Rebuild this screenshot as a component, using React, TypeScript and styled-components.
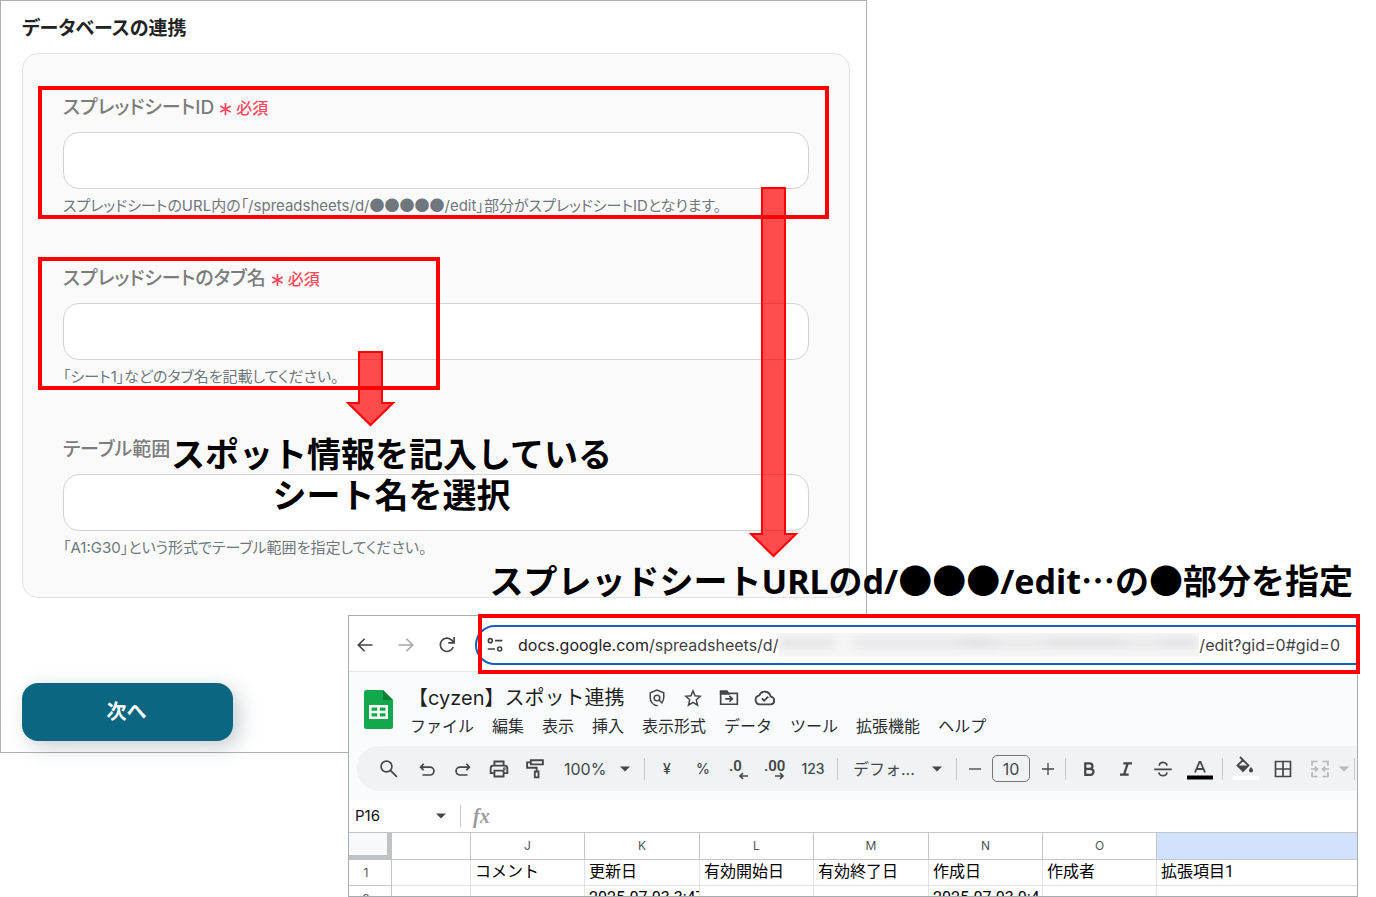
import React from "react";
import styled, { createGlobalStyle } from "styled-components";

const GlobalStyle = createGlobalStyle`
  *, *::before, *::after { box-sizing: border-box; }
  body {
    margin: 0;
    background: #fff;
    font-family: Inter, "Noto Sans CJK JP", sans-serif;
    overflow: hidden;
  }
  button, input, select { font: inherit; color: inherit; }
`;

const Stage = styled.main`
  display: grid;
  grid-template-columns: minmax(0, 1fr);
  align-items: start;
`;

/* ---------- settings form ---------- */

const FormPanel = styled.form`
  grid-area: 1 / 1;
  width: 63%;
  padding: 14px 16px 11px 21px;
  border: 1px solid #b0b0b0;
  background: #fff;
`;

const FormTitle = styled.h1`
  margin: 0 0 10px;
  font-size: 19px;
  line-height: 28px;
  font-weight: 600;
  color: #222;
  font-feature-settings: "palt";
`;

const Card = styled.div`
  display: flex;
  flex-direction: column;
  gap: 46px;
  padding: 39px 40px 37px;
  border: 1px solid #e0e2e3;
  border-radius: 16px;
  background: #fafafa;
`;

const Field = styled.div`
  position: relative;
  display: flex;
  flex-direction: column;
`;

const LabelRow = styled.div`
  display: flex;
  align-items: center;
  gap: 5px;
  margin-bottom: 9px;
  line-height: 30px;
  font-feature-settings: "palt";
`;

const FieldLabel = styled.label`
  font-size: 19px;
  font-weight: 500;
  color: #7c7c7c;
`;

const Required = styled.span`
  display: flex;
  align-items: center;
  gap: 4px;
  font-size: 16px;
  font-weight: 500;
  color: #f84a5e;
`;

const TextBox = styled.input`
  height: 57px;
  width: 100%;
  padding: 0 16px;
  border: 1px solid #d0d4d6;
  border-radius: 16px;
  background: #fff;
`;

const Help = styled.p`
  margin: 5px 0 0;
  font-size: 15px;
  line-height: 24px;
  color: #6f777c;
  white-space: nowrap;
  font-feature-settings: "palt";
`;

const Dots = styled.span`
  font-family: "Noto Sans CJK JP", sans-serif;
  font-feature-settings: normal;
  line-height: 1;
`;

const NextButton = styled.button`
  display: block;
  width: 211px;
  height: 58px;
  margin-top: 85px;
  padding: 0 2px 4px 0;
  border: 0;
  border-radius: 16px;
  background: #0b6781;
  color: #fff;
  font-size: 20px;
  font-weight: 700;
  box-shadow: 6px 6px 20px rgba(40, 60, 75, 0.25);
`;

/* ---------- annotations ---------- */

const Frame = styled.div<{ $wide?: boolean }>`
  position: absolute;
  z-index: 2;
  top: -7px;
  bottom: -1px;
  left: -25px;
  ${(p) => (p.$wide ? "right: -20px;" : "width: 402px;")}
  border: 4px solid #f00;
  pointer-events: none;
`;

const ArrowBox = styled.svg<{ $side: "left" | "right"; $x: number; $y: number }>`
  position: absolute;
  z-index: 3;
  top: ${(p) => p.$y}px;
  ${(p) => p.$side}: ${(p) => p.$x}px;
  overflow: visible;
  pointer-events: none;
`;

const Note = styled.p`
  margin: 0;
  position: absolute;
  z-index: 4;
  font-family: "Noto Sans CJK JP", sans-serif;
  font-size: 34px;
  line-height: 41px;
  font-weight: 700;
  color: #000;
  text-align: center;
  white-space: nowrap;
`;

const SheetNote = styled(Note)`
  top: -3px;
  left: 108px;
`;

const UrlNote = styled(Note)`
  bottom: 100%;
  right: 5px;
  padding-bottom: 13px;
`;

const Latin = styled.span`
  font-family: "Noto Sans", sans-serif;
`;

const UrlFrame = styled.div`
  position: absolute;
  z-index: 2;
  top: -1px;
  left: 130px;
  right: -2px;
  height: 60px;
  border: 4px solid #f00;
  pointer-events: none;
`;

/* ---------- browser window ---------- */

const WindowArea = styled.section`
  grid-area: 1 / 1;
  position: relative;
  z-index: 1;
  margin: 615px 18px 0 348px;
`;

const Window = styled.div`
  border: 1px solid #a9abac;
  background: #fff;
  overflow: hidden;
`;

const ChromeBar = styled.div`
  display: flex;
  align-items: center;
  height: 56px;
  padding-top: 3px;
  border-bottom: 1px solid #e3e6ea;
`;

const NavButton = styled.button<{ $dim?: boolean }>`
  display: grid;
  place-items: center;
  width: 41px;
  height: 40px;
  padding: 0 10px 0 0;
  border: 0;
  background: none;
  color: ${(p) => (p.$dim ? "#a6a8aa" : "#404346")};
`;

const NavGroup = styled.div`
  display: flex;
  width: 126px;
`;

const AddressBar = styled.div`
  display: flex;
  flex: 1;
  align-items: center;
  height: 40px;
  margin-right: -20px;
  padding: 0 35px 0 10px;
  border: 2px solid #1a5fbe;
  border-radius: 20px;
  font-size: 16px;
  color: #3f4245;
  white-space: nowrap;
`;

const Host = styled.span`
  margin-left: 15px;
  color: #1f2124;
`;

const Masked = styled.span`
  position: relative;
  flex: 1;
  height: 24px;
  background: #f6f6f7;
  overflow: hidden;

  &::before {
    content: "";
    position: absolute;
    inset: 5px 2px 9px 2px;
    background: linear-gradient(
      90deg,
      #e4e4e5 0 12%, #f4f4f5 14% 17%, #e6e6e8 19% 42%, #dfdfe1 45% 50%,
      #e8e8ea 53% 62%, #e0e0e2 66% 80%, #e8e8ea 84% 90%, #e2e2e4 92%
    );
    filter: blur(4px);
  }
`;

const DocHeader = styled.header`
  display: flex;
  align-items: flex-start;
  gap: 15px;
  height: 74px;
  padding: 11px 0 0 15px;
  background: #f9fbfd;
`;

const LogoSlot = styled.div`
  padding-top: 7px;
  line-height: 0;
`;

const DocTitleRow = styled.div`
  display: flex;
  align-items: center;
  height: 29px;
  font-size: 20px;
  line-height: 28px;
  color: #1f1f1f;
  white-space: nowrap;
`;

const DocTitle = styled.h2`
  margin: 0 14px 0 0;
  font: inherit;
`;

const TitleButton = styled.button`
  display: grid;
  place-items: center;
  width: 36px;
  height: 28px;
  padding: 0;
  border: 0;
  background: none;
  color: #444746;
`;

const MenuBar = styled.nav`
  display: flex;
  gap: 18px;
  padding-left: 2px;
  font-size: 16px;
  line-height: 28px;
`;

const MenuButton = styled.button`
  padding: 0;
  border: 0;
  background: none;
  color: #2b2d2f;
  white-space: nowrap;
`;

const ToolbarArea = styled.div`
  padding: 0 0 9px 8px;
  background: #f9fbfd;
`;

const Toolbar = styled.div`
  display: flex;
  align-items: center;
  height: 45px;
  padding-left: 11px;
  border-radius: 23px 0 0 23px;
  background: #eff3f6;
  color: #444746;
  overflow: hidden;
`;

const Tool = styled.button<{ $w?: number; $dim?: boolean }>`
  display: grid;
  flex: none;
  place-items: center;
  width: ${(p) => p.$w ?? 36}px;
  height: 36px;
  padding: 0;
  border: 0;
  background: none;
  font-size: 14px;
  font-weight: 500;
  color: ${(p) => (p.$dim ? "#b4b8bb" : "#444746")};
`;

const Divider = styled.span`
  flex: none;
  width: 1px;
  height: 22px;
  margin: 0 4px;
  background: #c7cacd;
`;

const SelectBox = styled.span<{ $w: number }>`
  position: relative;
  display: flex;
  flex: none;
  align-items: center;
  width: ${(p) => p.$w}px;
  padding-left: 11px;
`;

const ToolSelect = styled.select`
  appearance: none;
  width: 100%;
  padding: 0;
  border: 0;
  background: none;
  font-size: 16px;
`;

const Caret = styled.svg`
  position: absolute;
  right: 10px;
  color: #444746;
  pointer-events: none;
`;

const SizeInput = styled.input`
  flex: none;
  width: 38px;
  height: 27px;
  margin: 0 4px;
  padding: 0;
  border: 1px solid #74787b;
  border-radius: 5px;
  background: none;
  font-size: 16px;
  text-align: center;
`;

const FormulaBar = styled.div`
  display: flex;
  align-items: center;
  height: 32px;
`;

const NameBox = styled.span`
  position: relative;
  display: flex;
  align-items: center;
  width: 107px;
`;

const NameInput = styled.input`
  width: 100%;
  padding: 0 0 2px 6px;
  border: 0;
  background: none;
  font-size: 15px;
  color: #111;
`;

const Fx = styled.span`
  margin-left: 8px;
  font-family: "Liberation Serif", serif;
  font-size: 20px;
  font-style: italic;
  font-weight: 700;
  color: #999b9d;
`;

const SheetClip = styled.div`
  height: 64px;
  overflow: hidden;
`;

const Grid = styled.table`
  width: 100%;
  border-collapse: separate;
  border-spacing: 0;
  table-layout: fixed;
  border-top: 1px solid #c3c6c8;

  th, td {
    height: 26px;
    padding: 0 4px;
    border-right: 1px solid #dfe1e3;
    border-bottom: 1px solid #dfe1e3;
    line-height: 22px;
    white-space: nowrap;
    overflow: hidden;
  }
  th:last-child, td:last-child { border-right: 0; }
  td {
    padding: 0 0 1px 4px;
    font-family: Roboto, "Noto Sans CJK JP", sans-serif;
    font-size: 16px;
    text-align: left;
    color: #000;
  }
  th {
    font-size: 12px;
    font-weight: 400;
    color: #50545a;
  }
  thead th { height: 27px; }
  tbody th { padding-right: 12px; }
  th { border-color: #c3c6c8; }
`;

const CornerCell = styled.th`
  && {
    border-right: 5px solid #c0c2c3;
    border-bottom: 5px solid #c0c2c3;
    background: #f8f9fa;
  }
`;

const ActiveHead = styled.th`
  background: #d3e2fc;
`;

/* ---------- drawings ---------- */

const Arrow = ({ side, x, y, length }: { side: "left" | "right"; x: number; y: number; length: number }) => (
  <ArrowBox $side={side} $x={x} $y={y} width={49} height={length} aria-hidden>
    <path
      d={`M13 1 H36 V${length - 24} H47 L24.5 ${length - 2} L2 ${length - 24} H13 Z`}
      fill="#f00"
      fillOpacity={0.7}
      stroke="#f00"
      strokeWidth={2}
    />
  </ArrowBox>
);

const Icon = ({ size = 20, sw = 2, children }: { size?: number; sw?: number; children: React.ReactNode }) => (
  <svg width={size} height={size} viewBox="0 0 24 24" fill="none" stroke="currentColor" strokeWidth={sw} aria-hidden>
    {children}
  </svg>
);

const CaretDown = () => (
  <Caret width={10} height={6} viewBox="0 0 10 6" aria-hidden>
    <path d="M0 0.5h10L5 5.5z" fill="currentColor" />
  </Caret>
);

const Asterisk = () => (
  <svg width={13} height={14} viewBox="0 0 13 14" stroke="currentColor" strokeWidth={1.8} aria-hidden>
    <path d="M6.5 2v12M1.300 5l10.400 6M11.700 5L1.300 11" />
  </svg>
);

const SheetsLogo = () => (
  <svg width={29} height={39} viewBox="0 0 29 39" aria-hidden>
    <path d="M2.500 0H19l10 10v26.500a2.500 2.500 0 0 1-2.500 2.500h-24A2.500 2.500 0 0 1 0 36.500v-34A2.500 2.500 0 0 1 2.500 0z" fill="#12a84b" />
    <path d="M19 0l10 10H19z" fill="#0b7f37" />
    <path d="M5 15h19v14H5zM7.500 17.500v3.200h5.800v-3.200zM15.700 17.500v3.200h5.800v-3.200zM7.500 23.200v3.300h5.800v-3.300zM15.700 23.200v3.300h5.800v-3.300z" fill="#fff" fillRule="evenodd" />
  </svg>
);

const Decimal = ({ more }: { more?: boolean }) => (
  <svg width={26} height={24} viewBox="0 0 26 24" aria-hidden>
    <text x={more ? 2 : 3} y={14} fontSize={15} fontWeight={600} fontFamily="Roboto, sans-serif" fill="currentColor">
      {more ? ".00" : ".0"}
    </text>
    <path
      d={more ? "M13 19h8M18 16l3 3l-3 3" : "M22 19h-8M17 16l-3 3l3 3"}
      fill="none"
      stroke="currentColor"
      strokeWidth={1.7}
    />
  </svg>
);

/* ---------- data ---------- */

const menus = ["ファイル", "編集", "表示", "挿入", "表示形式", "データ", "ツール", "拡張機能", "ヘルプ"];
const columnWidths = [43, 79, 114, 115, 114, 115, 114, 114];
const letters = ["", "J", "K", "L", "M", "N", "O"];
const rows = [
  ["", "コメント", "更新日", "有効開始日", "有効終了日", "作成日", "作成者", "拡張項目1"],
  ["", "", "2025-07-03 3:47", "", "", "2025-07-03 0:44", "", ""],
];

const RequiredMark = () => (
  <Required>
    <Asterisk />
    必須
  </Required>
);

export default function App() {
  return (
    <>
      <GlobalStyle />
      <Stage lang="ja">
        <FormPanel onSubmit={(e) => e.preventDefault()}>
          <FormTitle>データベースの連携</FormTitle>
          <Card>
            <Field>
              <LabelRow>
                <FieldLabel htmlFor="sheet-id">スプレッドシートID</FieldLabel>
                <RequiredMark />
              </LabelRow>
              <TextBox id="sheet-id" type="text" />
              <Help>
                スプレッドシートのURL内の「/spreadsheets/d/<Dots>●●●●●</Dots>/edit」部分がスプレッドシートIDとなります。
              </Help>
              <Frame $wide />
              <Arrow side="right" x={11} y={94} length={371} />
            </Field>
            <Field>
              <LabelRow>
                <FieldLabel htmlFor="tab-name">スプレッドシートのタブ名</FieldLabel>
                <RequiredMark />
              </LabelRow>
              <TextBox id="tab-name" type="text" />
              <Help>「シート1」などのタブ名を記載してください。</Help>
              <Frame />
              <Arrow side="left" x={283} y={87} length={76} />
            </Field>
            <Field>
              <LabelRow>
                <FieldLabel htmlFor="range">テーブル範囲</FieldLabel>
              </LabelRow>
              <TextBox id="range" type="text" />
              <Help>「A1:G30」という形式でテーブル範囲を指定してください。</Help>
              <SheetNote>
                スポット情報を記入している
                <br />
                シート名を選択
              </SheetNote>
            </Field>
          </Card>
          <NextButton type="submit">次へ</NextButton>
        </FormPanel>

        <WindowArea>
          <UrlNote>
            スプレッドシート<Latin>URL</Latin>の<Latin>d/</Latin>●●●<Latin>/edit</Latin>…の●部分を指定
          </UrlNote>
          <UrlFrame />
          <Window>
            <ChromeBar>
              <NavGroup>
                <NavButton aria-label="戻る">
                  <Icon><path d="M21 12H4M11.500 4.500L4 12l7.500 7.500" /></Icon>
                </NavButton>
                <NavButton $dim aria-label="進む">
                  <Icon><path d="M3 12h17M12.500 4.500L20 12l-7.500 7.500" /></Icon>
                </NavButton>
                <NavButton aria-label="再読み込み">
                  <Icon><path d="M19.500 14.500A8 8 0 1 1 18 6.500L20 9M20.500 2.500V9.500H13.500" /></Icon>
                </NavButton>
              </NavGroup>
              <AddressBar>
                <Icon size={16} sw={2.4}>
                  <circle cx="5" cy="5.500" r="3" />
                  <path d="M12 5.500h11M1 18h11" />
                  <circle cx="19" cy="18" r="3" />
                </Icon>
                <Host>docs.google.com</Host>
                <span>/spreadsheets/d/</span>
                <Masked />
                <span>/edit?gid=0#gid=0</span>
              </AddressBar>
            </ChromeBar>

            <DocHeader>
              <LogoSlot><SheetsLogo /></LogoSlot>
              <div>
                <DocTitleRow>
                  <DocTitle>【cyzen】スポット連携</DocTitle>
                  <TitleButton aria-label="保護">
                    <Icon size={18}>
                      <path d="M13 22.500c-6-1.500-10-5.500-10-11V5l9-3.500L21 5v6c0 3-1 5.500-2.500 7.500L15 15" />
                      <circle cx="12" cy="12" r="3.800" />
                    </Icon>
                  </TitleButton>
                  <TitleButton aria-label="スター">
                    <Icon size={18}>
                      <path d="M12 2.500l2.700 6.600 7.100.6-5.400 4.700 1.600 7L12 17.700l-6 3.700 1.600-7L2.200 9.700l7.100-.6z" />
                    </Icon>
                  </TitleButton>
                  <TitleButton aria-label="移動">
                    <Icon size={20}>
                      <path d="M2 4v15.500h20V6.500H11.500L9.500 4z" />
                      <path d="M2 4h7.500l2 3H2z" fill="currentColor" />
                      <path d="M7.500 13h8M12.500 9.500L16 13l-3.500 3.500" />
                    </Icon>
                  </TitleButton>
                  <TitleButton aria-label="保存済み">
                    <Icon size={22}>
                      <path d="M6.500 19a5 5 0 0 1-.7-9.900 6.500 6.500 0 0 1 12.400 1.400A4.300 4.300 0 0 1 18.500 19z" />
                      <path d="M8.500 12.500l2.500 2.500 4.500-4.500" />
                    </Icon>
                  </TitleButton>
                </DocTitleRow>
                <MenuBar>
                  {menus.map((m) => (
                    <MenuButton key={m}>{m}</MenuButton>
                  ))}
                </MenuBar>
              </div>
            </DocHeader>

            <ToolbarArea>
              <Toolbar>
                <Tool $w={41} aria-label="検索">
                  <Icon><circle cx="9" cy="9" r="6.500" /><path d="M13.700 13.700L21.500 21.500" /></Icon>
                </Tool>
                <Tool aria-label="元に戻す">
                  <Icon size={18} sw={2.3}><path d="M7.500 5L3.500 9.500l4 4M3.500 9.500h12.500a5.200 5.200 0 0 1 0 10.500H6" /></Icon>
                </Tool>
                <Tool aria-label="やり直し">
                  <Icon size={18} sw={2.3}><path d="M16.500 5l4 4.500-4 4M20.500 9.500H8a5.200 5.200 0 0 0 0 10.500H18" /></Icon>
                </Tool>
                <Tool aria-label="印刷">
                  <Icon sw={2.2}><path d="M6.500 8V3h11v5M6 17H2V11a3 3 0 0 1 3-3h14a3 3 0 0 1 3 3v6h-4M6.500 14h11v7h-11z" /><circle cx="18.500" cy="11.500" r=".6" /></Icon>
                </Tool>
                <Tool aria-label="書式を貼り付け">
                  <Icon sw={2.2}><path d="M7 1.500h14.500v5H7zM7 4H2.500v6.500H14V15M11.800 15h4.400v7h-4.400z" /></Icon>
                </Tool>
                <SelectBox $w={87}>
                  <ToolSelect aria-label="ズーム"><option>100%</option></ToolSelect>
                  <CaretDown />
                </SelectBox>
                <Divider />
                <Tool>¥</Tool>
                <Tool>%</Tool>
                <Tool aria-label="小数点以下の桁数を減らす"><Decimal /></Tool>
                <Tool aria-label="小数点以下の桁数を増やす"><Decimal more /></Tool>
                <Tool $w={40}>123</Tool>
                <Divider />
                <SelectBox $w={110}>
                  <ToolSelect aria-label="フォント"><option>デフォ...</option></ToolSelect>
                  <CaretDown />
                </SelectBox>
                <Divider />
                <Tool $w={27} aria-label="縮小"><Icon size={16}><path d="M3 12h18" /></Icon></Tool>
                <SizeInput aria-label="フォントサイズ" defaultValue="10" />
                <Tool $w={27} aria-label="拡大"><Icon size={16}><path d="M3 12h18M12 3v18" /></Icon></Tool>
                <Divider />
                <Tool $w={37} aria-label="太字">
                  <Icon size={18} sw={3}><path d="M7 4.500h6a3.600 3.600 0 0 1 0 7.200H7zM7 11.700h7a4 4 0 0 1 0 8H7z" /></Icon>
                </Tool>
                <Tool $w={37} aria-label="斜体">
                  <Icon size={18} sw={3}><path d="M8.500 4.500H20M4 19.500h11.500M14.300 4.500l-5 15" /></Icon>
                </Tool>
                <Tool $w={37} aria-label="取り消し線">
                  <Icon><path d="M1.500 12.500h21M17 8c-.5-2.500-2.500-4-5-4S7.500 5.500 7.500 8M7 16c.5 2.500 2.500 4 5 4s4.500-1.500 4.800-4" /></Icon>
                </Tool>
                <Tool $w={37} aria-label="文字色">
                  <svg width={26} height={24} viewBox="0 0 26 24" aria-hidden>
                    <path d="M8 15.500L12.500 5h1L18 15.500M9.500 12h7" fill="none" stroke="currentColor" strokeWidth={1.8} />
                    <path d="M0 18.500h26v4H0z" fill="#000" />
                  </svg>
                </Tool>
                <Divider />
                <Tool $w={37} aria-label="塗りつぶしの色">
                  <svg width={26} height={26} viewBox="0 0 26 26" aria-hidden>
                    <path d="M7 1l8.500 8.500L10 15l-5.500-5.500L10 4" fill="none" stroke="currentColor" strokeWidth={1.8} />
                    <path d="M5 9.500h10.500L10 15z" fill="currentColor" />
                    <path d="M18 11c1.300 1.600 2 2.600 2 3.500a2 2 0 0 1-4 0c0-.9.700-1.900 2-3.500z" fill="currentColor" />
                    <path d="M0 20h26v4H0z" fill="#fff" />
                  </svg>
                </Tool>
                <Tool $w={37} aria-label="枠線">
                  <Icon><path d="M3 3h18v18H3zM12 3v18M3 12h18" /></Icon>
                </Tool>
                <Tool $w={37} $dim aria-label="セルを結合">
                  <Icon><path d="M9 3H2.500v5M15 3h6.500v5M9 21H2.500v-5M15 21h6.500v-5M1 12h7.500M6 9l3 3-3 3M23 12h-7.500M18 9l-3 3 3 3" /></Icon>
                </Tool>
                <Tool $w={12} $dim aria-label="結合の種類">
                  <svg width={10} height={6} viewBox="0 0 10 6" aria-hidden><path d="M0 0.500h10L5 5.500z" fill="currentColor" /></svg>
                </Tool>
                <Divider />
              </Toolbar>
            </ToolbarArea>

            <FormulaBar>
              <NameBox>
                <NameInput aria-label="名前ボックス" defaultValue="P16" />
                <CaretDown />
              </NameBox>
              <Divider />
              <Fx>fx</Fx>
            </FormulaBar>

            <SheetClip>
              <Grid>
                <colgroup>
                  {columnWidths.map((w, i) => (
                    <col key={i} width={w} />
                  ))}
                  <col />
                </colgroup>
                <thead>
                  <tr>
                    <CornerCell />
                    {letters.map((l, i) => (
                      <th key={i} scope="col">{l}</th>
                    ))}
                    <ActiveHead scope="col" />
                  </tr>
                </thead>
                <tbody>
                  {rows.map((cells, r) => (
                    <tr key={r}>
                      <th scope="row">{r + 1}</th>
                      {cells.map((c, i) => (
                        <td key={i}>{c}</td>
                      ))}
                    </tr>
                  ))}
                </tbody>
              </Grid>
            </SheetClip>
          </Window>
        </WindowArea>
      </Stage>
    </>
  );
}
